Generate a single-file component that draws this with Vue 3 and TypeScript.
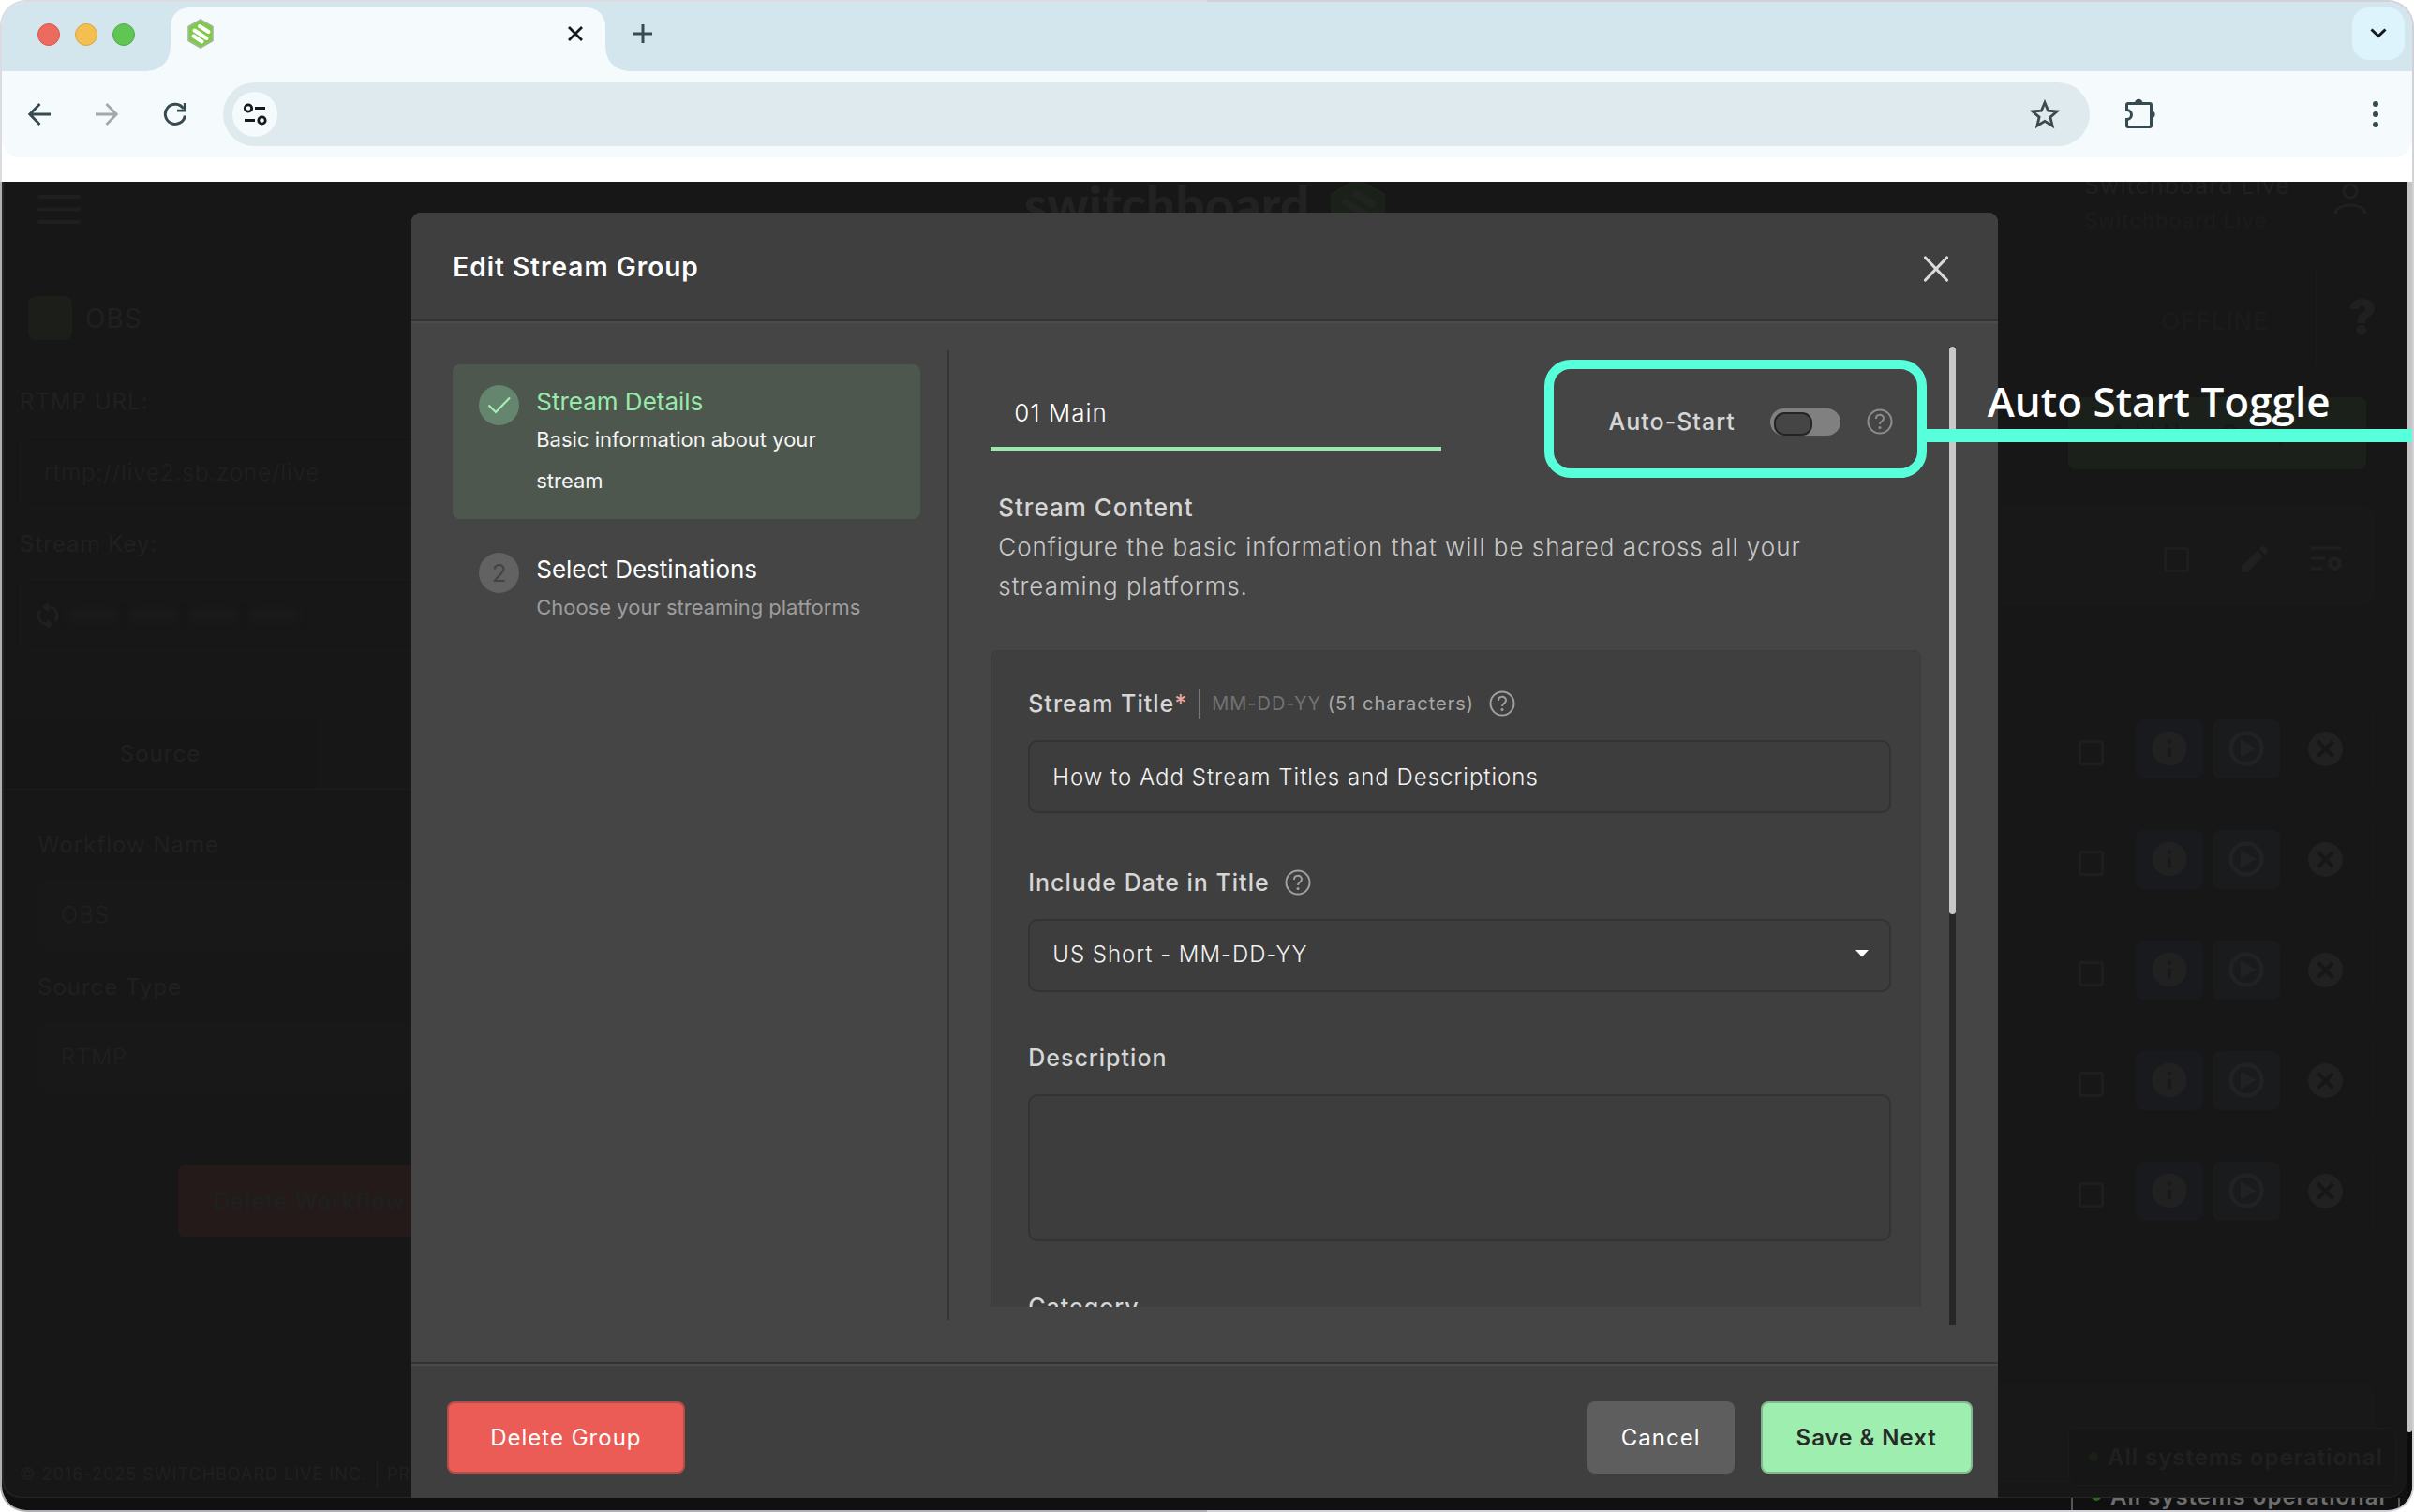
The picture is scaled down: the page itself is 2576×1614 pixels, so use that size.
<script setup lang="ts">
import { ref } from 'vue'

interface Step {
  id: number
  title: string
  text: string
  active: boolean
}

const steps: Step[] = [
  { id: 1, title: 'Stream Details', text: 'Basic information about your stream', active: true },
  { id: 2, title: 'Select Destinations', text: 'Choose your streaming platforms', active: false },
]

const groupName = ref('01 Main')
const autoStart = ref(false)
const streamTitle = ref('How to Add Stream Titles and Descriptions')
const dateFormat = ref('us-short')
const description = ref('')
const rtmpUrl = ref('rtmp://live2.sb.zone/live')
const workflowName = ref('OBS')
const sourceType = ref('RTMP')
const destinations = [1, 2, 3, 4, 5]
</script>

<template>
  <div class="window">
    <div class="frame">
      <header class="tabs">
        <div class="lights">
          <span class="light light-red"></span>
          <span class="light light-yellow"></span>
          <span class="light light-green"></span>
        </div>
        <div class="tab">
          <svg class="favicon" viewBox="0 0 28 32" aria-hidden="true">
            <path d="M14 1 27 8.500V23.500L14 31 1 23.500V8.500Z" fill="#7fca4b" stroke="#a3b79b" stroke-width="1.500" stroke-linejoin="round" />
            <path d="M13 8l9.500 6M7.500 12.500l13 8.500M6.500 18.500l9 6" stroke="#fff" stroke-width="4" stroke-linecap="round" fill="none" />
          </svg>
          <button class="plain" type="button" aria-label="Close tab">
            <svg width="16" height="16" viewBox="0 0 16 16"><path d="M1 1l14 14M15 1 1 15" stroke="#15191b" stroke-width="2.800" /></svg>
          </button>
        </div>
        <button class="plain new-tab" type="button" aria-label="New tab">
          <svg width="20" height="20" viewBox="0 0 20 20"><path d="M10 0v20M0 10h20" stroke="#374a50" stroke-width="3" /></svg>
        </button>
        <button class="tab-menu" type="button" aria-label="Search tabs">
          <svg width="18" height="12" viewBox="0 0 18 12"><path d="M1.500 1.500 9 8.500l7.500-7" stroke="#15191b" stroke-width="3" fill="none" /></svg>
        </button>
      </header>

      <nav class="toolbar">
        <button class="plain" type="button" aria-label="Back">
          <svg width="24" height="24" viewBox="0 0 24 24"><path d="M12.500 1 1.800 12l10.700 11M2 12h22" stroke="#374a50" stroke-width="2.800" fill="none" /></svg>
        </button>
        <button class="plain" type="button" aria-label="Forward">
          <svg width="24" height="24" viewBox="0 0 24 24"><path d="M11.500 1l10.700 11-10.700 11M22 12H0" stroke="#a3a8ab" stroke-width="2.800" fill="none" /></svg>
        </button>
        <button class="plain" type="button" aria-label="Reload">
          <svg width="26" height="26" viewBox="0 0 26 26"><path d="M23.400 14.500A10.600 10.600 0 1 1 21.800 7" stroke="#374a50" stroke-width="3" fill="none" /><path d="M24.500 1v9.500H15V7.800h6.800V1Z" fill="#374a50" /></svg>
        </button>
        <div class="address">
          <button class="site-info" type="button" aria-label="Site information">
            <svg width="26" height="26" viewBox="0 0 26 26" fill="none" stroke="#15191b" stroke-width="2.800"><circle cx="6" cy="6.500" r="3.700" /><path d="M13 6.500h11M2 19.500h11" /><circle cx="20.500" cy="19.500" r="3.700" /></svg>
          </button>
          <input class="url" type="text" aria-label="Address" />
          <button class="plain" type="button" aria-label="Bookmark">
            <svg width="32" height="32" viewBox="0 0 32 32"><path d="M16 3.500l3.600 8.700 9.400.8-7.100 6.100 2.200 9.200L16 23.400l-8.100 4.900 2.200-9.200L3 13l9.400-.8Z" fill="none" stroke="#3f484b" stroke-width="2.800" /></svg>
          </button>
        </div>
        <button class="plain" type="button" aria-label="Extensions">
          <svg width="32" height="34" viewBox="0 0 32 34"><path d="M3 5.500h23q1.500 0 1.500 1.500v22q0 1.500-1.500 1.500H3q-1.500 0-1.500-1.500v-6.500a5 5 0 0 0 0-10V7Q1.500 5.500 3 5.500Z" fill="none" stroke="#374a50" stroke-width="3" /><path d="M10 5a4.200 4.200 0 0 1 8.400 0ZM27.500 13a4.200 4.200 0 0 1 0 8.400Z" fill="#374a50" /></svg>
        </button>
        <button class="plain browser-menu" type="button" aria-label="Menu">
          <svg width="6" height="28" viewBox="0 0 6 28" fill="#374a50"><circle cx="3" cy="3" r="3" /><circle cx="3" cy="14" r="3" /><circle cx="3" cy="25" r="3" /></svg>
        </button>
      </nav>

      <div class="stage">
        <div class="page">
          <div class="app">
            <header class="app-head">
              <svg class="burger" width="46" height="32" viewBox="0 0 46 32"><path d="M2 2h42M2 15.500h42M2 29h42" stroke="#1f1f1f" stroke-width="4" stroke-linecap="round" /></svg>
              <div class="brand">
                <span>switchboard</span>
                <svg width="60" height="68" viewBox="0 0 60 68"><path d="M30 2 58 17v34L30 66 2 51V17Z" fill="#1a2118" stroke="#1d231b" stroke-width="2" stroke-linejoin="round" /><path d="M28 17l18 11M17 26l25 15M14 40l18 11" stroke="#212321" stroke-width="8" stroke-linecap="round" /></svg>
              </div>
              <div class="user">
                <div class="user-text">
                  <span class="user-name">Switchboard Live</span>
                  <span class="user-org">Switchboard Live</span>
                </div>
                <svg width="36" height="34" viewBox="0 0 36 34" fill="none" stroke="#202020" stroke-width="3"><circle cx="18" cy="9" r="7" /><path d="M2 33c0-12 32-12 32 0" /></svg>
              </div>
            </header>

            <div class="app-body">
              <aside class="side">
                <h2 class="source"><span class="swatch"></span>OBS</h2>
                <label class="ghost-label" for="rtmp">RTMP URL:</label>
                <input id="rtmp" v-model="rtmpUrl" class="ghost-input outlined" type="text" />
                <span class="ghost-label">Stream Key:</span>
                <div class="ghost-input outlined key">
                  <svg width="24" height="28" viewBox="0 0 24 28" fill="none" stroke="#202020" stroke-width="3"><path d="M12 5c10 0 12 9 8 15M12 23C2 23 0 14 4 8" /><path d="M13 0v10L6 5ZM11 18v10l7-5Z" fill="#202020" stroke="none" /></svg>
                  <span class="smudge"></span><span class="smudge"></span><span class="smudge"></span><span class="smudge"></span>
                </div>
                <div class="side-tabs"><button type="button" class="side-tab">Source</button></div>
                <div class="side-form">
                  <label class="ghost-label" for="wname">Workflow Name</label>
                  <input id="wname" v-model="workflowName" class="ghost-input" type="text" />
                  <label class="ghost-label" for="stype">Source Type</label>
                  <input id="stype" v-model="sourceType" class="ghost-input" type="text" />
                </div>
                <button type="button" class="ghost-delete">Delete Workflow</button>
                <footer class="legal"><span>© 2016-2025 SWITCHBOARD LIVE INC.</span><a href="#privacy">PRIVACY POLICY</a></footer>
              </aside>

              <section class="board">
                <div class="status-row">
                  <span class="offline">OFFLINE</span>
                  <span class="help-mark">?</span>
                </div>
                <button type="button" class="add-group"><span>Add New Group</span><span>+</span></button>
                <div class="group-head">
                  <input class="tick" type="checkbox" aria-label="Select all" />
                  <svg class="pencil" width="28" height="28" viewBox="0 0 28 28" fill="#202020"><path d="M0 28v-7L17 5l6 6L7 28ZM19 3l3-3q2-1 4 1.500T28 6l-3 3Z" /></svg>
                  <svg width="33" height="28" viewBox="0 0 33 28" fill="none" stroke="#202020" stroke-width="3"><path d="M0 2h32M0 13h15M0 24h12" /><circle cx="25.500" cy="18.500" r="5" stroke-width="4" /><path d="M25.500 11v2M25.500 24v2M18.500 15l2 1M30.500 21l2 1M18.500 22l2-1M30.500 16l2-1" /></svg>
                </div>
                <div class="rows">
                  <div v-for="d in destinations" :key="d" class="row">
                    <input class="tick row-tick" type="checkbox" :aria-label="`Select destination ${d}`" />
                    <button type="button" class="chip chip-info" aria-label="Details">
                      <svg width="38" height="38" viewBox="0 0 38 38"><circle cx="19" cy="19" r="18.500" fill="#212121" /><path d="M19 9.500v4M19 17.500v11" stroke="#191a1e" stroke-width="4" /></svg>
                    </button>
                    <button type="button" class="chip chip-play" aria-label="Preview">
                      <svg width="38" height="38" viewBox="0 0 38 38"><circle cx="19" cy="19" r="16.500" fill="none" stroke="#212222" stroke-width="4.500" /><path d="M13 9.500 30 19 13 28.500Z" fill="#212222" /></svg>
                    </button>
                    <button type="button" class="plain remove" aria-label="Remove">
                      <svg width="37" height="37" viewBox="0 0 37 37"><circle cx="18.500" cy="18.500" r="18.500" fill="#212121" /><path d="M10.500 10.500l16 16M26.500 10.500l-16 16" stroke="#171717" stroke-width="4" /></svg>
                    </button>
                  </div>
                </div>
                <div class="group-head next-group"></div>
              </section>
            </div>
            <div class="system"><span class="dot"></span>All systems operational</div>
          </div>

          <div class="modal" role="dialog" aria-labelledby="dialog-title">
            <header class="modal-head">
              <h1 id="dialog-title">Edit Stream Group</h1>
              <button class="plain" type="button" aria-label="Close">
                <svg width="26" height="28" viewBox="0 0 26 28"><path d="M1.500 2l23 24M24.500 2l-23 24" stroke="#dadada" stroke-width="3.200" stroke-linecap="round" /></svg>
              </button>
            </header>

            <div class="modal-body">
              <ol class="steps">
                <li v-for="s in steps" :key="s.id" class="step" :class="{ active: s.active }">
                  <span class="badge">
                    <svg v-if="s.active" width="26" height="20" viewBox="0 0 26 20"><path d="M1.500 9.500 9 17 24 1.500" stroke="#a3f0b5" stroke-width="2.200" fill="none" /></svg>
                    <template v-else>{{ s.id }}</template>
                  </span>
                  <div>
                    <h2>{{ s.title }}</h2>
                    <p>{{ s.text }}</p>
                  </div>
                </li>
              </ol>

              <div class="pane">
                <div class="content">
                  <div class="name-row">
                    <input v-model="groupName" class="group-name" type="text" aria-label="Group name" />
                    <div class="auto">
                      <label for="auto-start">Auto-Start</label>
                      <input id="auto-start" v-model="autoStart" class="switch" type="checkbox" role="switch" />
                      <svg class="hint dim" viewBox="0 0 28 28"><circle cx="14" cy="14" r="12.500" /><path d="M10 11c0-5.500 8-5.500 8-.5 0 3.500-4 3-4 6.500" /><circle class="pt" cx="14" cy="20.500" r="1.500" /></svg>
                    </div>
                  </div>

                  <div class="intro">
                    <h3>Stream Content</h3>
                    <p>Configure the basic information that will be shared across all your streaming platforms.</p>
                  </div>

                  <form class="card" @submit.prevent>
                    <div class="field">
                      <div class="label-row">
                        <label for="title">Stream Title<span class="req">*</span></label>
                        <span class="bar"></span>
                        <span class="note"><span class="mask">MM-DD-YY</span> (51 characters)</span>
                        <svg class="hint" viewBox="0 0 28 28"><circle cx="14" cy="14" r="12.500" /><path d="M10 11c0-5.500 8-5.500 8-.5 0 3.500-4 3-4 6.500" /><circle class="pt" cx="14" cy="20.500" r="1.500" /></svg>
                      </div>
                      <input id="title" v-model="streamTitle" class="box" type="text" />
                    </div>
                    <div class="field field-select">
                      <div class="label-row">
                        <label for="date">Include Date in Title</label>
                        <svg class="hint" viewBox="0 0 28 28"><circle cx="14" cy="14" r="12.500" /><path d="M10 11c0-5.500 8-5.500 8-.5 0 3.500-4 3-4 6.500" /><circle class="pt" cx="14" cy="20.500" r="1.500" /></svg>
                      </div>
                      <div class="select-wrap">
                        <select id="date" v-model="dateFormat" class="box">
                          <option value="us-short">US Short - MM-DD-YY</option>
                        </select>
                        <svg class="caret" width="14" height="8" viewBox="0 0 14 8"><path d="M0 0h14L7 7.500Z" fill="#fff" /></svg>
                      </div>
                    </div>
                    <div class="field field-select">
                      <div class="label-row"><label for="desc">Description</label></div>
                      <textarea id="desc" v-model="description" class="box area"></textarea>
                    </div>
                    <div class="label-row"><label for="category">Category</label></div>
                    <input id="category" class="box" type="text" />
                  </form>
                </div>
                <div class="scroll"><span class="thumb"></span></div>
              </div>
            </div>

            <footer class="modal-foot">
              <button class="btn btn-delete" type="button">Delete Group</button>
              <button class="btn btn-cancel" type="button">Cancel</button>
              <button class="btn btn-save" type="button">Save &amp; Next</button>
            </footer>
          </div>

          <div class="callout">
            <div class="callout-box"></div>
            <div class="callout-line"><span>Auto Start Toggle</span></div>
          </div>
        </div>
        <div class="page-scroll"><span></span></div>
      </div>
      <div class="under"><div class="under-badge"><span class="dot"></span>All systems operational</div></div>
    </div>
  </div>
</template>

<style>
body {
  background: #fff;
}
</style>

<style scoped>
* {
  box-sizing: border-box;
}
button,
input,
select,
textarea {
  font: inherit;
  color: inherit;
  letter-spacing: inherit;
  border: 0;
  margin: 0;
  background: none;
  outline: none;
  border-radius: 0;
}
h1, h2, h3, p, ol {
  margin: 0;
  padding: 0;
}
svg {
  display: block;
  flex: none;
}
.window {
  height: 100vh;
  padding: 2px;
  border-radius: 28px;
  background: linear-gradient(#dcdbe2 194px, #b1b0b5 194px) left / 50% 100% no-repeat, #d2d1d8;
  font-family: Inter, "Liberation Sans", sans-serif;
  overflow: hidden;
}
.frame {
  height: 100%;
  display: flex;
  flex-direction: column;
  border-radius: 26px;
  overflow: hidden;
  background: #fff;
}
.plain {
  display: flex;
  padding: 0;
}

/* browser chrome */
.tabs {
  flex: none;
  height: 74px;
  display: flex;
  align-items: flex-start;
  background: #d3e6ed;
}
.lights {
  display: flex;
  gap: 16px;
  padding: 23px 38px 0;
}
.light {
  width: 24px;
  height: 24px;
  border-radius: 50%;
  border: 1px solid;
}
.light-red { background: #ed6a5e; border-color: #d8574b; }
.light-yellow { background: #f5bf4f; border-color: #d9a441; }
.light-green { background: #61c554; border-color: #4eae42; }
.tab {
  position: relative;
  width: 464px;
  height: 68px;
  margin-top: 6px;
  padding: 12px 24px 0 18px;
  display: flex;
  justify-content: space-between;
  border-radius: 20px 20px 0 0;
  background: #f5fafd;
}
.tab::before,
.tab::after {
  content: "";
  position: absolute;
  bottom: 0;
  width: 24px;
  height: 24px;
}
.tab::before {
  right: 100%;
  background: radial-gradient(circle at 0 0, transparent 23px, #f5fafd 24px);
}
.tab::after {
  left: 100%;
  background: radial-gradient(circle at 100% 0, transparent 23px, #f5fafd 24px);
}
.favicon {
  width: 28px;
  height: 32px;
}
.tab .plain {
  height: 32px;
  align-items: center;
}
.new-tab {
  margin: 24px auto 0 30px;
}
.tab-menu {
  width: 56px;
  height: 56px;
  margin: 6px 8px 0;
  padding: 0;
  display: flex;
  align-items: center;
  justify-content: center;
  border-radius: 18px;
  background: #ddf4fc;
}
.toolbar {
  flex: none;
  height: 92px;
  display: flex;
  align-items: center;
  padding: 0 36px 0 28px;
  gap: 48px;
  background: #f5fafd;
  border-radius: 0 0 20px 20px;
}
.address {
  flex: 1;
  height: 68px;
  display: flex;
  align-items: center;
  margin: 0 -10px;
  padding: 0 32px 0 10px;
  border-radius: 34px;
  background: #deeaee;
}
.site-info {
  width: 48px;
  height: 48px;
  padding: 0;
  display: flex;
  align-items: center;
  justify-content: center;
  border-radius: 50%;
  background: #f5fafd;
}
.url {
  flex: 1;
  height: 48px;
}
.browser-menu {
  margin-left: auto;
  padding-left: 184px;
}

/* dimmed page */
.stage {
  flex: 1;
  min-height: 0;
  display: flex;
  margin-top: 26px;
  background: #101010;
}
.page {
  position: relative;
  flex: 1;
  min-width: 0;
}
.page-scroll {
  width: 6px;
  background: #0c0c0c;
}
.page-scroll span {
  display: block;
  height: 95%;
  border-radius: 0 0 3px 3px;
  background: #c4c4c4;
}
.app {
  position: absolute;
  inset: 0;
  overflow: hidden;
  background: #171717;
  border-left: 2px solid #262626;
  border-bottom: 1px solid #262626;
  border-radius: 0 0 20px 20px;
  color: #202020;
  font-size: 24px;
  letter-spacing: 1px;
}
.app-head {
  display: flex;
  justify-content: space-between;
  align-items: flex-start;
  height: 109px;
  margin-top: -15px;
  padding: 0 42px 0 36px;
}
.burger {
  margin-top: 29px;
}
.brand {
  display: flex;
  gap: 22px;
  position: absolute;
  top: -10px;
  left: 50%;
  transform: translateX(-50%);
  font: 900 55px/68px Lato, sans-serif;
  letter-spacing: 0;
  color: #222;
}
.brand svg {
  margin-top: 6px;
}
.user {
  display: flex;
}
.user-text {
  width: 266px;
  display: flex;
  flex-direction: column;
}
.user-name {
  font-size: 25px;
  line-height: 38px;
}
.user-org {
  font-size: 22px;
  line-height: 36px;
  color: #1c1c1c;
}
.user svg {
  margin-top: 16px;
}
.app-body {
  display: flex;
  justify-content: space-between;
}
.side {
  width: 600px;
  padding-left: 17px;
}
.source {
  display: flex;
  align-items: center;
  gap: 14px;
  margin: 28px 0 50px 9px;
  font-size: 28px;
  font-weight: 400;
  line-height: 44px;
  height: 47px;
}
.swatch {
  width: 47px;
  height: 47px;
  border-radius: 8px;
  background: #1c1e19;
}
.ghost-label {
  display: block;
  margin-bottom: 21px;
  line-height: 32px;
}
.ghost-input {
  display: block;
  width: 100%;
  height: 75px;
  padding: 0 25px;
  border-radius: 8px;
  background: #181818;
  font-weight: 300;
}
.outlined {
  height: 77px;
  margin-bottom: 22px;
  border: 1px solid #1b1b1b;
  border-radius: 10px;
  background: none;
}
.key {
  display: flex;
  align-items: center;
  gap: 10px;
  padding: 0 17px;
}
.smudge {
  width: 54px;
  height: 12px;
  border-radius: 6px;
  background: #1b1b1b;
  filter: blur(4px);
}
.side-tabs {
  margin: 72px 0 0 -17px;
  border-bottom: 1px solid #1b1d1a;
}
.side-tab {
  width: 334px;
  height: 75px;
  background: #161616;
}
.side-form {
  padding: 43px 0 0 19px;
}
.side-form .ghost-input {
  margin-bottom: 24px;
}
.ghost-delete {
  height: 76px;
  margin: 54px 0 0 169px;
  padding: 0 38px;
  border-radius: 6px;
  background: #241a19;
  color: #1d2121;
  font-weight: 500;
}
.legal {
  display: flex;
  align-items: center;
  margin-top: 240px;
  font-size: 18px;
  line-height: 28px;
  white-space: nowrap;
}
.legal a {
  margin-left: 10px;
  padding-left: 10px;
  border-left: 1px solid #202020;
  color: inherit;
  text-decoration: none;
}
.board {
  width: 900px;
  padding-right: 36px;
}
.status-row {
  display: flex;
  align-items: center;
  justify-content: flex-end;
  height: 100px;
  margin-right: -4px;
}
.offline {
  height: 100%;
  padding-right: 50px;
  border-right: 1px solid #1b1b1b;
  font-size: 26px;
  line-height: 110px;
  color: #1b1b1b;
  font-weight: 500;
}
.help-mark {
  padding-left: 34px;
  font-size: 50px;
  font-weight: 900;
  letter-spacing: 0;
}
.add-group {
  display: flex;
  align-items: center;
  justify-content: space-between;
  width: 318px;
  height: 77px;
  margin: 36px 7px 0 auto;
  padding: 0 44px;
  border-radius: 8px;
  background: #1b201b;
  color: #151a16;
  font-weight: 600;
}
.group-head {
  display: flex;
  align-items: center;
  justify-content: flex-end;
  height: 104px;
  margin-top: 40px;
  padding: 8px 32px 0 0;
  border: 1px solid #1a1a1a;
  border-radius: 8px;
  background: #181818;
}
.tick {
  appearance: none;
  width: 27px;
  height: 27px;
  border: 3px solid #1e1e1e;
  border-radius: 3px;
}
.group-head .tick {
  margin-right: 56px;
}
.pencil {
  margin-right: 46px;
}
.rows {
  display: flex;
  flex-direction: column;
  gap: 16px;
  margin-top: 103px;
}
.row {
  display: flex;
  align-items: center;
  justify-content: flex-end;
  height: 102px;
  padding-right: 31px;
  border: 1px solid #191919;
  border-left: 0;
  border-radius: 8px;
}
.row-tick {
  margin: 8px 34px 0 0;
}
.chip {
  display: flex;
  align-items: center;
  justify-content: center;
  width: 72px;
  height: 63px;
  margin-right: 10px;
  padding: 0;
  border-radius: 8px;
}
.chip-info { background: #191a1e; }
.chip-play { background: #1a1b1c; }
.remove { margin-left: 20px; }
.next-group {
  margin-top: 156px;
}
.system {
  position: absolute;
  right: 11px;
  bottom: 12px;
  display: flex;
  align-items: center;
  width: 350px;
  height: 62px;
  padding-left: 21px;
  border: 1px solid #1c1c1c;
  border-radius: 8px;
  background: #161616;
  font-weight: 600;
  white-space: nowrap;
}
.dot {
  width: 10px;
  height: 10px;
  margin-right: 10px;
  border-radius: 50%;
  background: #1a1f18;
}
.under {
  flex: none;
  height: 13px;
  display: flex;
  justify-content: flex-end;
  align-items: flex-end;
  overflow: hidden;
  background: #101010;
}
.under-badge {
  display: flex;
  align-items: center;
  width: 351px;
  height: 30px;
  margin-right: 13px;
  padding-left: 20px;
  border: solid #555;
  border-width: 0 2px;
  font-size: 24px;
  font-weight: 600;
  letter-spacing: 1px;
  white-space: nowrap;
  color: #6d6d6d;
}
.under .dot {
  background: #2b6a1a;
}

/* dialog */
.modal {
  position: absolute;
  top: 33px;
  bottom: 0;
  left: calc(17% + 1px);
  right: 17%;
  display: flex;
  flex-direction: column;
  border-radius: 10px 10px 0 0;
  overflow: hidden;
  background: #454545;
  color: #fff;
  letter-spacing: 1px;
}
.modal-head {
  flex: none;
  display: flex;
  align-items: center;
  justify-content: space-between;
  height: 116px;
  padding: 6px 53px 0 44px;
  background: #3f3f3f;
  border-bottom: 2px solid #333;
  box-shadow: 0 2px 0 #4c4c4c;
}
.modal-head h1 {
  font-size: 28px;
  line-height: 40px;
  font-weight: 600;
  padding-bottom: 4px;
}
.modal-body {
  flex: 1;
  min-height: 0;
  display: flex;
}
.steps {
  flex: none;
  width: 574px;
  margin: 31px 0 45px;
  padding: 15px 29px 0 44px;
  border-right: 2px solid #343434;
  list-style: none;
}
.step {
  display: flex;
  gap: 18px;
  padding: 22px 28px 19px;
  border-radius: 8px;
  letter-spacing: 0;
}
.step + .step {
  margin-top: 14px;
}
.active {
  background: #4d574e;
}
.active p {
  max-width: 330px;
}
.badge {
  flex: none;
  display: flex;
  align-items: center;
  justify-content: center;
  width: 43px;
  height: 43px;
  border-radius: 50%;
  background: #626262;
  color: #444;
  font-size: 26px;
}
.active .badge {
  background: #66856e;
}
.step h2 {
  font-size: 26px;
  line-height: 36px;
  font-weight: 400;
}
.step p {
  font-size: 22px;
  line-height: 44px;
  color: #9d9d9d;
}
.step.active h2 {
  color: #98e9ab;
}
.step.active p {
  color: #f4f4f4;
}
.pane {
  flex: 1;
  min-width: 0;
  display: flex;
  margin: 27px 45px 40px 44px;
}
.content {
  flex: 1;
  min-width: 0;
  height: calc(100% - 19px);
  overflow: hidden;
  margin-right: 30px;
}
.scroll {
  width: 7px;
  background: #272727;
}
.thumb {
  display: block;
  height: 58%;
  border-radius: 4px;
  background: #c8c8c8;
}
.name-row {
  display: flex;
  align-items: center;
  justify-content: space-between;
  padding: 33px 30px 0 0;
}
.group-name {
  width: 481px;
  height: 78px;
  padding: 0 25px;
  border-bottom: 4px solid #98e9ab;
  font-size: 26px;
  font-weight: 300;
}
.auto {
  display: flex;
  align-items: center;
  margin-top: 16px;
  font-size: 25px;
  font-weight: 500;
  color: #d6d6d6;
}
.switch {
  appearance: none;
  width: 75px;
  height: 29px;
  margin: 0 28px 0 37px;
  padding: 4px;
  border-radius: 15px;
  background: #808080;
}
.switch::before {
  content: "";
  display: block;
  width: 37px;
  height: 21px;
  border: 2px solid #242424;
  border-radius: 11px;
  background: #454545;
}
.hint {
  width: 28px;
  height: 28px;
  fill: none;
  stroke: #a0a0a0;
  stroke-width: 2;
}
.hint .pt {
  fill: #a0a0a0;
  stroke: none;
}
.dim {
  opacity: 0.8;
}
.intro {
  margin: 40px 0 47px 8px;
  max-width: 900px;
  font-size: 26px;
  line-height: 42px;
  color: #c8c8c8;
}
.intro h3 {
  font-size: 26px;
  font-weight: 500;
  color: #d6d6d6;
}
.intro p {
  font-weight: 300;
}
.card {
  padding: 38px 31px 40px 39px;
  border: 1px solid #3b3b3b;
  border-radius: 8px;
  background: #3f3f3f;
}
.field {
  margin-bottom: 56px;
}
.field-select {
  margin-bottom: 52px;
}
.label-row {
  display: flex;
  align-items: center;
  height: 36px;
  margin-bottom: 21px;
  font-size: 25px;
  font-weight: 500;
  color: #d6d6d6;
}
.label-row .hint {
  margin-left: 16px;
}
.req {
  color: #e8a79a;
}
.bar {
  width: 2px;
  height: 31px;
  margin: 0 12px;
  background: #777;
}
.note {
  font-size: 20px;
  font-weight: 400;
  color: #a8a8a8;
}
.mask {
  color: #727272;
}
.box {
  display: block;
  width: 100%;
  height: 78px;
  padding: 0 24px;
  border: 2px solid #333;
  border-radius: 10px;
  background: #3d3d3d;
  color: #f2f2f2;
  font-size: 24px;
  font-weight: 300;
}
.select-wrap {
  position: relative;
}
select.box {
  appearance: none;
  padding-bottom: 4px;
}
.caret {
  position: absolute;
  right: 24px;
  top: 33px;
}
.area {
  height: 157px;
  resize: none;
}
.modal-foot {
  flex: none;
  display: flex;
  align-items: center;
  height: 145px;
  padding: 14px 27px 0 38px;
  background: #3f3f3f;
  border-top: 2px solid #333;
  box-shadow: inset 0 2px 0 #4a4a4a;
}
.btn {
  height: 77px;
  padding: 0 36px;
  border-radius: 8px;
  font-size: 24px;
}
.btn-delete {
  margin-right: auto;
  padding: 0 44px;
  background: #eb5c56;
  border: 2px solid #b84c47;
}
.btn-cancel {
  background: #5e5e5e;
}
.btn-save {
  margin-left: 28px;
  background: #9eeeb0;
  border: 2px solid #7fb98d;
  color: #272b28;
  font-weight: 600;
}

/* annotation */
.callout {
  position: absolute;
  top: 190px;
  left: calc(83% - 484px);
  right: -6px;
  display: flex;
  pointer-events: none;
}
.callout-box {
  width: 408px;
  height: 126px;
  border: 10px solid #57ffda;
  border-radius: 28px;
}
.callout-line {
  flex: 1;
  height: 88px;
  padding: 21px 0 0 65px;
  border-bottom: 14px solid #57ffda;
  font: 600 44px/46px "Open Sans", sans-serif;
  color: #fff;
  white-space: nowrap;
}
</style>
